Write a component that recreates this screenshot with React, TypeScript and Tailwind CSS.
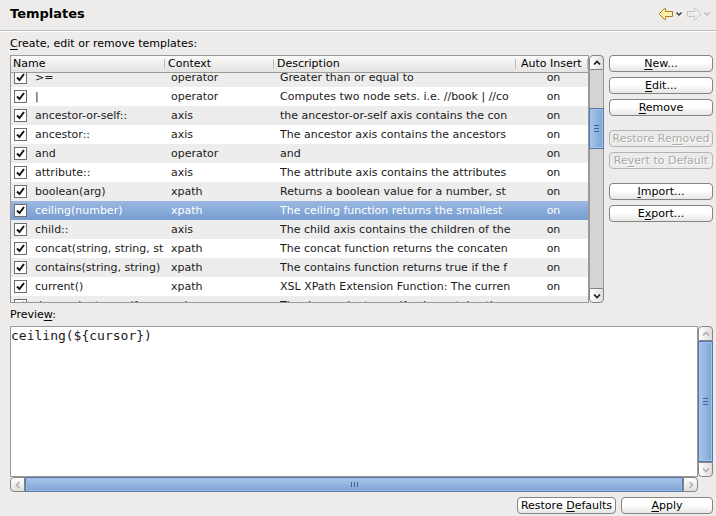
import { useState } from "react";
import type { ReactNode } from "react";

type Template = {
  name: string;
  context: string;
  description: string;
};

const templates: Template[] = [
  { name: ">=", context: "operator", description: "Greater than or equal to" },
  { name: "|", context: "operator", description: "Computes two node sets. i.e. //book | //co" },
  { name: "ancestor-or-self::", context: "axis", description: "the ancestor-or-self axis contains the con" },
  { name: "ancestor::", context: "axis", description: "The ancestor axis contains the ancestors" },
  { name: "and", context: "operator", description: "and" },
  { name: "attribute::", context: "axis", description: "The attribute axis contains the attributes" },
  { name: "boolean(arg)", context: "xpath", description: "Returns a boolean value for a number, st" },
  { name: "ceiling(number)", context: "xpath", description: "The ceiling function returns the smallest" },
  { name: "child::", context: "axis", description: "The child axis contains the children of the" },
  { name: "concat(string, string, st", context: "xpath", description: "The concat function returns the concaten" },
  { name: "contains(string, string)", context: "xpath", description: "The contains function returns true if the f" },
  { name: "current()", context: "xpath", description: "XSL XPath Extension Function: The curren" },
  { name: "descendant-or-self::", context: "axis", description: "The descendant-or-self axis contains the" },
];

type Direction = "up" | "down" | "left" | "right";

const chevrons: Record<Direction, string> = {
  up: "M1 5.5 4 2.5 7 5.5",
  down: "M1 2.5 4 5.5 7 2.5",
  left: "M5.5 1 2.5 4 5.5 7",
  right: "M2.5 1 5.5 4 2.5 7",
};

const stepShape: Record<Direction, string> = {
  up: "rounded-t-[4px] bg-linear-to-r",
  down: "rounded-b-[4px] bg-linear-to-r",
  left: "rounded-l-[4px] bg-linear-to-b",
  right: "rounded-r-[4px] bg-linear-to-b",
};

function StepButton({ direction, disabled = false }: { direction: Direction; disabled?: boolean }) {
  return (
    <button
      type="button"
      disabled={disabled}
      aria-label={`Scroll ${direction}`}
      className={`flex size-[15px] shrink-0 items-center justify-center border border-[#868583] from-white to-[#dededc] ${stepShape[direction]}`}
    >
      <svg viewBox="0 0 8 8" className="size-2" fill="none" stroke={disabled ? "#b0afad" : "#1c1c1c"} strokeWidth="1.7">
        <path d={chevrons[direction]} />
      </svg>
    </button>
  );
}

function Grip({ vertical = false }: { vertical?: boolean }) {
  return (
    <span className={`flex gap-[2px] ${vertical ? "flex-col" : "flex-row"}`}>
      {[0, 1, 2].map((n) => (
        <span key={n} className={`bg-[#3f6398] ${vertical ? "h-px w-[5px]" : "h-[5px] w-px"}`} />
      ))}
    </span>
  );
}

const verticalThumb =
  "flex items-center justify-center border border-[#5579ac] bg-linear-to-r from-[#a9c6ea] to-[#7fa2d4] shadow-[inset_0_0_0_1px_#a5c3e8]";
const horizontalThumb =
  "flex items-center justify-center border border-[#5579ac] bg-linear-to-b from-[#a9c6ea] to-[#7fa2d4] shadow-[inset_0_0_0_1px_#9dbce4]";

function PushButton({ children, disabled = false, className = "" }: { children: ReactNode; disabled?: boolean; className?: string }) {
  return (
    <button
      type="button"
      disabled={disabled}
      className={`flex h-[17px] items-center justify-center rounded-[4px] border whitespace-nowrap ${
        disabled
          ? "border-[#b5b4b2] bg-[#ecebe9] text-[#aaa9a7] [text-shadow:1px_1px_0_#ffffff]"
          : "border-[#868583] bg-linear-to-b from-white from-45% to-[#e6e6e4] text-black"
      } ${className}`}
    >
      <span>{children}</span>
    </button>
  );
}

function Key({ children }: { children: string }) {
  return <span className="underline underline-offset-2">{children}</span>;
}

function HistoryArrow({ forward = false }: { forward?: boolean }) {
  return (
    <button type="button" disabled={forward} aria-label={forward ? "Forward" : "Back"} className="flex items-center gap-[3px]">
      <svg viewBox="0 0 14 12" className={`h-3 w-[14px] ${forward ? "-scale-x-100" : ""}`}>
        <path
          d="M6.5 .5H5.5L.5 5.5V6.5L5.5 11.5H6.5V8.5H13.5V3.5H6.5Z"
          fill={forward ? "#eeedeb" : "#fdf0b4"}
          stroke={forward ? "#c6c5c2" : "#b67a14"}
        />
      </svg>
      <svg viewBox="0 0 6 4" className="h-1 w-[6px]" fill="none" stroke={forward ? "#bcbbb8" : "#3a3a3a"} strokeWidth="1.4">
        <path d="M.5 .5 3 3 5.5 .5" />
      </svg>
    </button>
  );
}

const headings = ["Name", "Context", "Description", "Auto Insert"];

export default function App() {
  const [selected, setSelected] = useState("ceiling(number)");

  return (
    <main className="flex min-h-screen flex-col bg-[#edeceb] font-['DejaVu_Sans',sans-serif] text-[11px] leading-[13px] text-black">
      <header className="flex h-8 items-center justify-between border-b border-white pr-[6px] pb-1 pl-[10px] shadow-[inset_0_-1px_0_#bdbcba]">
        <h1 className="text-[13px] font-bold">Templates</h1>
        <nav className="flex items-center gap-[5px]" aria-label="History">
          <HistoryArrow />
          <HistoryArrow forward />
        </nav>
      </header>

      <div className="flex flex-col pt-[5px] pr-[3px] pl-[10px]">
        <p id="list-label" className="pb-[5px]">
          <Key>C</Key>reate, edit or remove templates:
        </p>

        <div className="flex gap-[5px]">
          <div className="flex h-[248px] min-w-0 flex-1">
            <div
              className="min-w-0 flex-1 overflow-hidden border border-[#9a9997] bg-white"
              ref={(el) => {
                if (el) el.scrollTop = 5;
              }}
            >
              <table aria-labelledby="list-label" className="w-full table-fixed border-separate border-spacing-0">
                <colgroup>
                  <col className="w-[154px]" />
                  <col className="w-[109px]" />
                  <col />
                  <col className="w-[72px]" />
                </colgroup>
                <thead className="sticky top-0 z-10">
                  <tr>
                    {headings.map((h, i) => (
                      <th
                        key={h}
                        scope="col"
                        className="h-[17px] border-b border-[#9a9997] bg-linear-to-b from-[#fafafa] to-[#e4e3e1] p-0 text-left font-normal whitespace-nowrap"
                      >
                        <div className={`border-r border-[#bdbcba] leading-[10px] ${i === 0 ? "pl-[2px]" : i === 3 ? "pl-[5px]" : "pl-[3px]"}`}>
                          {h}
                        </div>
                      </th>
                    ))}
                  </tr>
                </thead>
                <tbody>
                  {templates.map((t, i) => {
                    const tone =
                      t.name === selected
                        ? "bg-linear-to-b from-[#9ab8e2] to-[#769dce] text-white"
                        : i % 2 === 0
                          ? "bg-[#ededed] text-[#1a1a1a]"
                          : "bg-white text-[#1a1a1a]";
                    return (
                      <tr key={t.name} onClick={() => setSelected(t.name)} className="h-[19px]">
                        <td className={`h-[19px] p-0 ${tone}`}>
                          <label className="flex items-center gap-[8px] overflow-hidden pl-[3px] whitespace-nowrap">
                            <span className="grid size-[13px] shrink-0">
                              <input
                                type="checkbox"
                                defaultChecked
                                className="peer col-start-1 row-start-1 size-[13px] appearance-none border border-[#6f6e6c] bg-white"
                              />
                              <svg
                                viewBox="0 0 13 13"
                                className="pointer-events-none invisible col-start-1 row-start-1 size-[13px] peer-checked:visible"
                                fill="none"
                                stroke="#141414"
                                strokeWidth="2"
                              >
                                <path d="M3 6.5 5.5 9 10 3" />
                              </svg>
                            </span>
                            {t.name}
                          </label>
                        </td>
                        <td className={`p-0 pl-[6px] ${tone}`}>{t.context}</td>
                        <td className={`p-0 pl-[6px] ${tone}`}>
                          <div className="overflow-hidden whitespace-nowrap">{t.description}</div>
                        </td>
                        <td className={`p-0 pl-[3px] text-center ${tone}`}>on</td>
                      </tr>
                    );
                  })}
                </tbody>
              </table>
            </div>
            <div className="flex w-[15px] flex-col">
              <StepButton direction="up" />
              <div className="h-[38px] border-x border-[#9a9997] bg-[#d5d4d2]" />
              <div className={`h-[41px] ${verticalThumb}`}>
                <Grip vertical />
              </div>
              <div className="flex-1 border-x border-[#9a9997] bg-[#d5d4d2]" />
              <StepButton direction="down" />
            </div>
          </div>

          <div className="flex w-[104px] flex-col gap-[14px]">
            <div className="flex flex-col gap-[5px]">
              <PushButton><Key>N</Key>ew...</PushButton>
              <PushButton><Key>E</Key>dit...</PushButton>
              <PushButton><Key>R</Key>emove</PushButton>
            </div>
            <div className="flex flex-col gap-[5px]">
              <PushButton disabled>Restore Re<Key>m</Key>oved</PushButton>
              <PushButton disabled>Re<Key>v</Key>ert to Default</PushButton>
            </div>
            <div className="flex flex-col gap-[5px]">
              <PushButton><Key>I</Key>mport...</PushButton>
              <PushButton>E<Key>x</Key>port...</PushButton>
            </div>
          </div>
        </div>

        <label htmlFor="preview" className="pt-[5px] pb-[5px]">
          Previe<Key>w</Key>:
        </label>
        <div className="grid grid-cols-[1fr_15px]">
          <textarea
            id="preview"
            readOnly
            value="ceiling(${cursor})"
            className="h-[151px] resize-none overflow-hidden border border-[#9a9997] bg-white pt-px font-['DejaVu_Sans_Mono',monospace] text-[13px] leading-[16px] text-[#1a1a1a] outline-none"
          />
          <div className="flex flex-col">
            <StepButton direction="up" disabled />
            <div className={`flex-1 ${verticalThumb}`}>
              <Grip vertical />
            </div>
            <StepButton direction="down" disabled />
          </div>
          <div className="flex">
            <StepButton direction="left" disabled />
            <div className={`flex-1 ${horizontalThumb}`}>
              <Grip />
            </div>
            <StepButton direction="right" disabled />
          </div>
        </div>

        <div className="flex justify-end gap-[5px] pt-[5px]">
          <PushButton className="w-[99px]">Restore <Key>D</Key>efaults</PushButton>
          <PushButton className="w-[92px]"><Key>A</Key>pply</PushButton>
        </div>
      </div>
    </main>
  );
}
